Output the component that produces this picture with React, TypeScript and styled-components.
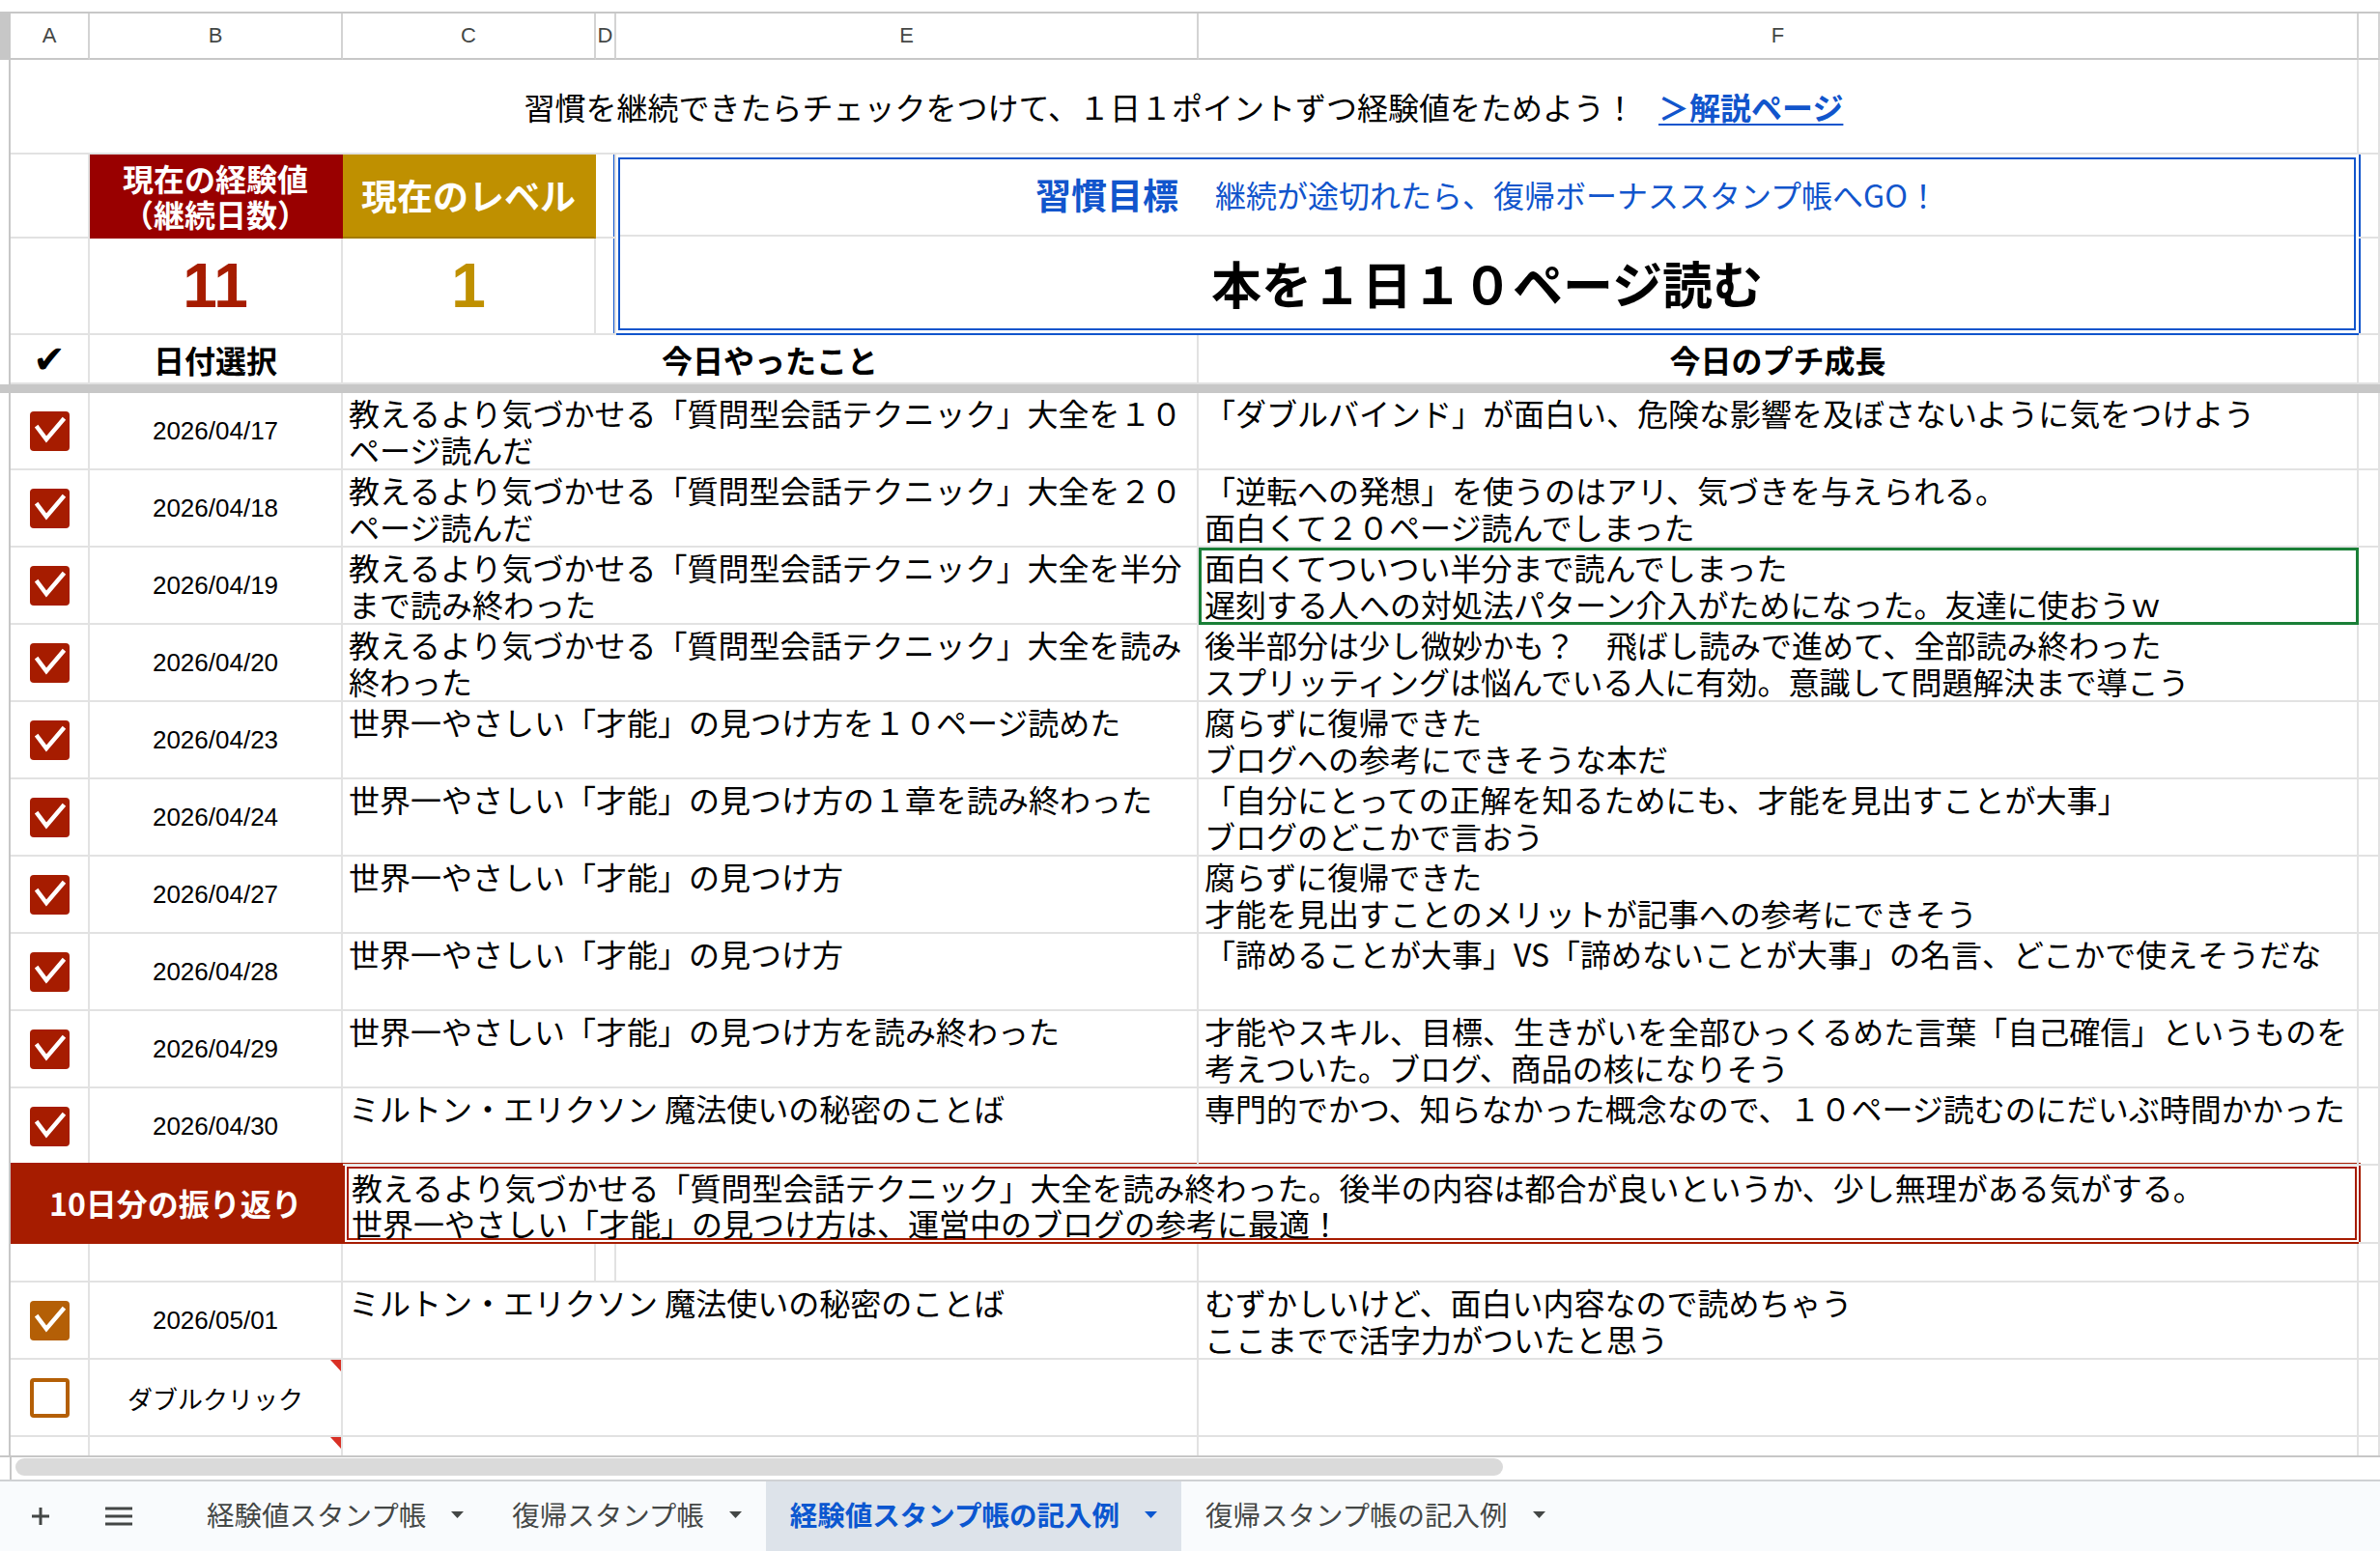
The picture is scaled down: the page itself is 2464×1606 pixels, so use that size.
import React from "react";
import styled, { createGlobalStyle } from "styled-components";

const JP = `"Noto Sans CJK JP", "Noto Sans", sans-serif`;
const LAT = `"Liberation Sans", Arial, "Noto Sans CJK JP", sans-serif`;
const GRID = "#e2e2e2";
const HEAD_LINE = "#c7c7c7";
const RED = "#a61c00";
const GOLD = "#bf9000";
const BLUE = "#1155cc";
const ORANGE = "#b45f06";

type LogRow = { date: string; did: string; grow: string; selected?: boolean };

const LOG: LogRow[] = [
  {
    date: "2026/04/17",
    did: "教えるより気づかせる「質問型会話テクニック」大全を１０\nページ読んだ",
    grow: "「ダブルバインド」が面白い、危険な影響を及ぼさないように気をつけよう",
  },
  {
    date: "2026/04/18",
    did: "教えるより気づかせる「質問型会話テクニック」大全を２０\nページ読んだ",
    grow: "「逆転への発想」を使うのはアリ、気づきを与えられる。\n面白くて２０ページ読んでしまった",
  },
  {
    date: "2026/04/19",
    did: "教えるより気づかせる「質問型会話テクニック」大全を半分\nまで読み終わった",
    grow: "面白くてついつい半分まで読んでしまった\n遅刻する人への対処法パターン介入がためになった。友達に使おうｗ",
    selected: true,
  },
  {
    date: "2026/04/20",
    did: "教えるより気づかせる「質問型会話テクニック」大全を読み\n終わった",
    grow: "後半部分は少し微妙かも？　飛ばし読みで進めて、全部読み終わった\nスプリッティングは悩んでいる人に有効。意識して問題解決まで導こう",
  },
  {
    date: "2026/04/23",
    did: "世界一やさしい「才能」の見つけ方を１０ページ読めた",
    grow: "腐らずに復帰できた\nブログへの参考にできそうな本だ",
  },
  {
    date: "2026/04/24",
    did: "世界一やさしい「才能」の見つけ方の１章を読み終わった",
    grow: "「自分にとっての正解を知るためにも、才能を見出すことが大事」\nブログのどこかで言おう",
  },
  {
    date: "2026/04/27",
    did: "世界一やさしい「才能」の見つけ方",
    grow: "腐らずに復帰できた\n才能を見出すことのメリットが記事への参考にできそう",
  },
  {
    date: "2026/04/28",
    did: "世界一やさしい「才能」の見つけ方",
    grow: "「諦めることが大事」VS「諦めないことが大事」の名言、どこかで使えそうだな",
  },
  {
    date: "2026/04/29",
    did: "世界一やさしい「才能」の見つけ方を読み終わった",
    grow: "才能やスキル、目標、生きがいを全部ひっくるめた言葉「自己確信」というものを\n考えついた。ブログ、商品の核になりそう",
  },
  {
    date: "2026/04/30",
    did: "ミルトン・エリクソン 魔法使いの秘密のことば",
    grow: "専門的でかつ、知らなかった概念なので、１０ページ読むのにだいぶ時間かかった",
  },
];

const TABS = ["経験値スタンプ帳", "復帰スタンプ帳", "経験値スタンプ帳の記入例", "復帰スタンプ帳の記入例"];

const GlobalStyle = createGlobalStyle`
  html, body { margin: 0; padding: 0; background: #fff; }
  body { font-family: ${JP}; }
  *, *::before, *::after { box-sizing: border-box; }
`;

const Page = styled.div`
  width: 2464px;
  height: 1606px;
  display: flex;
  flex-direction: column;
  overflow: hidden;
  background: #fff;
`;

const TopStrip = styled.div`
  flex: none;
  height: 14px;
  border-bottom: 2px solid ${HEAD_LINE};
`;

const Viewport = styled.div`
  flex: 1;
  min-height: 0;
  overflow: hidden;
`;

const Sheet = styled.div`
  display: grid;
  grid-template-columns: 11px 82px 262px 262px 21px 603px 1201px 22px;
  grid-template-rows: 48px 98px 87px 100px 51px 9px repeat(10, 80px) 81px 40px 80px 80px 80px;
`;

const Gutter = styled.div<{ $head?: boolean }>`
  background: ${(p) => (p.$head ? HEAD_LINE : "#fff")};
  border-right: ${(p) => (p.$head ? "none" : `2px solid ${HEAD_LINE}`)};
`;

const ColHead = styled.div`
  display: flex;
  align-items: center;
  justify-content: center;
  font: 22px ${LAT};
  color: #444746;
  border-right: 2px solid #d3d3d3;
  border-bottom: 2px solid ${HEAD_LINE};
`;

const Base = styled.div<{ $span?: number }>`
  grid-column: span ${(p) => p.$span ?? 1};
  min-width: 0;
  position: relative;
  border-right: 2px solid ${GRID};
  border-bottom: 2px solid ${GRID};
  color: #000;
`;

const Centered = styled(Base)`
  display: flex;
  align-items: center;
  justify-content: center;
`;

const Banner = styled(Centered)`
  font: 32px/38px ${JP};
  white-space: nowrap;
`;

const HelpLink = styled.a`
  margin-left: 24px;
  color: ${BLUE};
  font-weight: 700;
  text-decoration: underline;
  text-underline-offset: 4px;
  text-decoration-thickness: 2px;
`;

const StatLabel = styled(Centered)<{ $tone: "red" | "gold" }>`
  background: ${(p) => (p.$tone === "red" ? "#990000" : GOLD)};
  border-right-color: ${(p) => (p.$tone === "red" ? "#990000" : GOLD)};
  border-bottom-color: ${(p) => (p.$tone === "red" ? "#990000" : "#a37b00")};
  color: #fff;
  font-family: ${JP};
  font-weight: 700;
  font-size: ${(p) => (p.$tone === "red" ? "32px" : "37px")};
  line-height: 37px;
  text-align: center;
  white-space: pre;
`;

const StatValue = styled(Centered)<{ $tone: "red" | "gold" }>`
  color: ${(p) => (p.$tone === "red" ? RED : GOLD)};
  font: 700 64px ${LAT};
`;

const GoalBox = styled.div`
  grid-column: span 2;
  grid-row: span 2;
  display: flex;
  flex-direction: column;
  border: 7px double ${BLUE};
  margin: -2px -2px 0 -3px;
`;

const GoalHead = styled.div`
  height: 80px;
  flex: none;
  display: flex;
  align-items: center;
  justify-content: center;
  padding-bottom: 6px;
  border-bottom: 2px solid ${GRID};
  color: ${BLUE};
  font: 32px/40px ${JP};
  white-space: nowrap;
`;

const GoalTag = styled.span`
  font-size: 37px;
  font-weight: 700;
  margin-right: 38px;
`;

const GoalBody = styled.div`
  flex: 1;
  display: flex;
  align-items: center;
  justify-content: center;
  font: 700 52px/60px ${JP};
  white-space: nowrap;
`;

const ColumnTitle = styled(Centered)`
  font: 700 32px/38px ${JP};
`;

const TickMark = styled(Centered)`
  font: 700 40px "DejaVu Sans", sans-serif;
`;

const FreezeBar = styled.div`
  grid-column: 1 / -1;
  background: #c7c7c7;
`;

const Box = styled.span<{ $tone: "red" | "orange"; $checked: boolean }>`
  width: 41px;
  height: 41px;
  border-radius: 4px;
  display: flex;
  align-items: center;
  justify-content: center;
  background: ${(p) => (p.$checked ? (p.$tone === "red" ? RED : ORANGE) : "#fff")};
  border: ${(p) => (p.$checked ? "none" : `4px solid ${ORANGE}`)};
`;

const DateCell = styled(Centered)<{ $note?: boolean }>`
  font: 26px ${LAT};
  &::after {
    content: "";
    display: ${(p) => (p.$note ? "block" : "none")};
    position: absolute;
    top: 0;
    right: 0;
    border-style: solid;
    border-width: 0 11px 12px 0;
    border-color: transparent #d93025 transparent transparent;
  }
`;

const TextCell = styled(Base)<{ $selected?: boolean }>`
  padding: 1px 6px 0;
  font: 32px/38px ${JP};
  white-space: pre;
  outline: ${(p) => (p.$selected ? "3px solid #1a7f37" : "none")};
  outline-offset: -3px;
`;

const RecapLabel = styled(Centered)`
  background: ${RED};
  border-right-color: ${RED};
  border-bottom-color: ${RED};
  color: #fff;
  font: 700 32px ${JP};
  margin-top: -3px;
`;

const RecapBox = styled.div`
  grid-column: span 4;
  min-width: 0;
  border: 6px double ${RED};
  margin: -3px -2px 0 0;
  padding: 1px 3px 0;
  font: 32px/37px ${JP};
  white-space: pre;
`;

const ScrollArea = styled.div`
  flex: none;
  height: 25px;
  border-top: 2px solid ${HEAD_LINE};
  padding: 1px 0 0 16px;
  background: linear-gradient(to right, transparent 10px, ${HEAD_LINE} 10px, ${HEAD_LINE} 12px, transparent 12px);
`;

const ScrollThumb = styled.div`
  width: 1540px;
  height: 18px;
  border-radius: 9px;
  background: #dadada;
`;

const TabBar = styled.div`
  flex: none;
  height: 74px;
  display: flex;
  align-items: stretch;
  background: #f9fbfd;
  border-top: 2px solid #cfd1d4;
  padding-left: 17px;
`;

const IconBtn = styled.div`
  width: 50px;
  display: flex;
  align-items: center;
  justify-content: center;
  color: #444746;
  margin-right: 31px;
`;

const TabList = styled.div`
  display: flex;
  align-items: stretch;
  margin-left: 10px;
`;

const Tab = styled.div<{ $active?: boolean }>`
  display: flex;
  align-items: center;
  padding: 0 25px 4px;
  background: ${(p) => (p.$active ? "#dde3ea" : "transparent")};
  color: ${(p) => (p.$active ? "#0b57d0" : "#444746")};
  font: ${(p) => (p.$active ? 700 : 400)} 28.5px/34px ${JP};
  white-space: nowrap;
`;

const Caret = styled.svg`
  margin-left: 26px;
  flex: none;
`;

function Checkbox({ tone, checked }: { tone: "red" | "orange"; checked: boolean }) {
  return (
    <Box $tone={tone} $checked={checked}>
      {checked && (
        <svg width="41" height="41" viewBox="0 0 41 41">
          <path d="M8 17 L17 29 L34 9" fill="none" stroke="#fff" strokeWidth="4.5" strokeLinecap="square" />
        </svg>
      )}
    </Box>
  );
}

function LogLine({ row, tone, checked, note }: { row: LogRow; tone: "red" | "orange"; checked: boolean; note?: boolean }) {
  return (
    <>
      <Gutter />
      <Centered>
        <Checkbox tone={tone} checked={checked} />
      </Centered>
      <DateCell $note={note}>{row.date}</DateCell>
      <TextCell $span={3}>{row.did}</TextCell>
      <TextCell $selected={row.selected}>{row.grow}</TextCell>
      <Base />
    </>
  );
}

export default function App() {
  return (
    <Page>
      <GlobalStyle />
      <TopStrip />
      <Viewport>
        <Sheet>
          <Gutter $head />
          {["A", "B", "C", "D", "E", "F", ""].map((c, i) => (
            <ColHead key={i}>{c}</ColHead>
          ))}

          <Gutter />
          <Banner $span={6}>
            習慣を継続できたらチェックをつけて、１日１ポイントずつ経験値をためよう！
            <HelpLink>＞解説ページ</HelpLink>
          </Banner>
          <Base />

          <Gutter />
          <Base />
          <StatLabel $tone="red">{"現在の経験値\n（継続日数）"}</StatLabel>
          <StatLabel $tone="gold">現在のレベル</StatLabel>
          <Base />
          <GoalBox>
            <GoalHead>
              <GoalTag>習慣目標</GoalTag>
              継続が途切れたら、復帰ボーナススタンプ帳へGO！
            </GoalHead>
            <GoalBody>本を１日１０ページ読む</GoalBody>
          </GoalBox>
          <Base />

          <Gutter />
          <Base />
          <StatValue $tone="red">11</StatValue>
          <StatValue $tone="gold">1</StatValue>
          <Base />
          <Base />

          <Gutter />
          <TickMark>✔</TickMark>
          <ColumnTitle>日付選択</ColumnTitle>
          <ColumnTitle $span={3}>今日やったこと</ColumnTitle>
          <ColumnTitle>今日のプチ成長</ColumnTitle>
          <Base />

          <FreezeBar />

          {LOG.map((row) => (
            <LogLine key={row.date} row={row} tone="red" checked />
          ))}

          <Gutter />
          <RecapLabel $span={2}>10日分の振り返り</RecapLabel>
          <RecapBox>
            {"教えるより気づかせる「質問型会話テクニック」大全を読み終わった。後半の内容は都合が良いというか、少し無理がある気がする。\n世界一やさしい「才能」の見つけ方は、運営中のブログの参考に最適！"}
          </RecapBox>
          <Base />

          <Gutter />
          {[0, 1, 2, 3, 4, 5, 6].map((i) => (
            <Base key={i} />
          ))}

          <LogLine
            row={{
              date: "2026/05/01",
              did: "ミルトン・エリクソン 魔法使いの秘密のことば",
              grow: "むずかしいけど、面白い内容なので読めちゃう\nここまでで活字力がついたと思う",
            }}
            tone="orange"
            checked
          />
          <LogLine row={{ date: "ダブルクリック", did: "", grow: "" }} tone="orange" checked={false} note />

          <Gutter />
          <Base />
          <DateCell $note />
          <Base $span={3} />
          <Base />
          <Base />
        </Sheet>
      </Viewport>

      <ScrollArea>
        <ScrollThumb />
      </ScrollArea>

      <TabBar>
        <IconBtn>
          <svg width="20" height="20" viewBox="0 0 20 20">
            <path d="M10 1 V19 M1 10 H19" stroke="#444746" strokeWidth="3" />
          </svg>
        </IconBtn>
        <IconBtn>
          <svg width="28" height="20" viewBox="0 0 28 20">
            <path d="M0 2 H28 M0 10 H28 M0 18 H28" stroke="#444746" strokeWidth="3" />
          </svg>
        </IconBtn>
        <TabList>
          {TABS.map((t, i) => (
            <Tab key={t} $active={i === 2}>
              {t}
              <Caret width="13" height="7" viewBox="0 0 13 7">
                <path d="M0 0 H13 L6.5 7 Z" fill={i === 2 ? "#0b57d0" : "#444746"} />
              </Caret>
            </Tab>
          ))}
        </TabList>
      </TabBar>
    </Page>
  );
}
